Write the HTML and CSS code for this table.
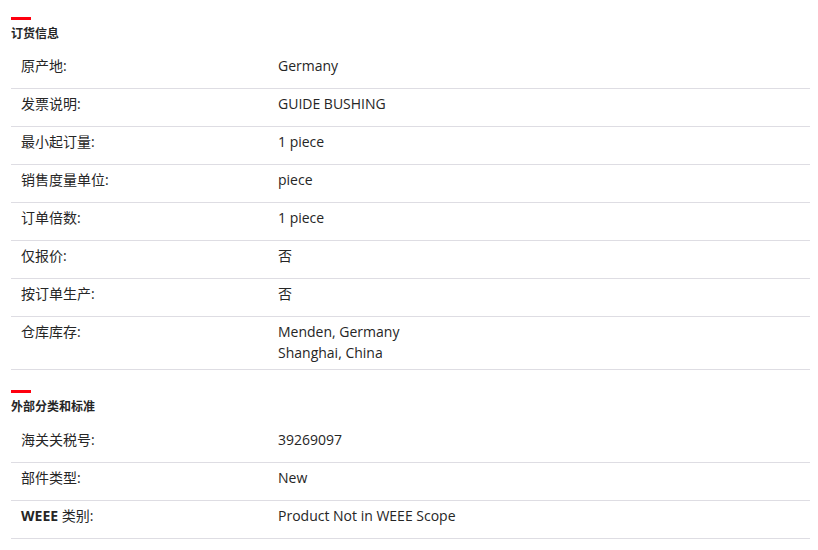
FILE: index.html
```html
<!DOCTYPE html>
<html lang="zh-CN">
<head>
<meta charset="utf-8">
<title>订货信息</title>
<link rel="stylesheet" href="styles.css">
</head>
<body>
<div class="page">
  <section class="section">
    <div class="bar"></div>
    <h2 class="title">订货信息</h2>
    <div class="rows">
      <div class="row"><div class="label">原产地:</div><div class="value">Germany</div></div>
      <div class="row"><div class="label">发票说明:</div><div class="value">GUIDE BUSHING</div></div>
      <div class="row"><div class="label">最小起订量:</div><div class="value">1 piece</div></div>
      <div class="row"><div class="label">销售度量单位:</div><div class="value">piece</div></div>
      <div class="row"><div class="label">订单倍数:</div><div class="value">1 piece</div></div>
      <div class="row"><div class="label">仅报价:</div><div class="value">否</div></div>
      <div class="row"><div class="label">按订单生产:</div><div class="value">否</div></div>
      <div class="row"><div class="label">仓库库存:</div><div class="value">Menden, Germany<br>Shanghai, China</div></div>
    </div>
  </section>
  <section class="section">
    <div class="bar"></div>
    <h2 class="title title-wide">外部分类和标准</h2>
    <div class="rows">
      <div class="row"><div class="label">海关关税号:</div><div class="value">39269097</div></div>
      <div class="row"><div class="label">部件类型:</div><div class="value">New</div></div>
      <div class="row"><div class="label"><b class="strong">WEEE</b> 类别:</div><div class="value">Product Not in WEEE Scope</div></div>
    </div>
  </section>
</div>
</body>
</html>
```
FILE: styles.css
```css
html, body {
  margin: 0;
  padding: 0;
  background: #ffffff;
}
body {
  font-family: "Open Sans", "Noto Sans CJK SC", sans-serif;
  color: #262626;
}
.page {
  padding: 17px 8px 0 11px;
  display: flex;
  flex-direction: column;
  gap: 20px;
}
.section {
  display: flex;
  flex-direction: column;
}
.bar {
  width: 20px;
  height: 3px;
  background: #ff000f;
}
.title {
  margin: 0;
  padding-top: 4px;
  font-size: 12px;
  line-height: 20px;
  font-weight: 700;
  height: 31px;
  box-sizing: border-box;
}
.title-wide {
  height: 32px;
}
.rows {
  display: flex;
  flex-direction: column;
}
.row {
  display: grid;
  grid-template-columns: 257px 1fr;
  padding: 4px 0 6px 10px;
  border-bottom: 1px solid #dedde3;
  font-size: 14px;
  line-height: 21px;
  min-height: 27px;
}
.label, .value {
  min-height: 27px;
}
.strong {
  font-weight: 700;
}
```
